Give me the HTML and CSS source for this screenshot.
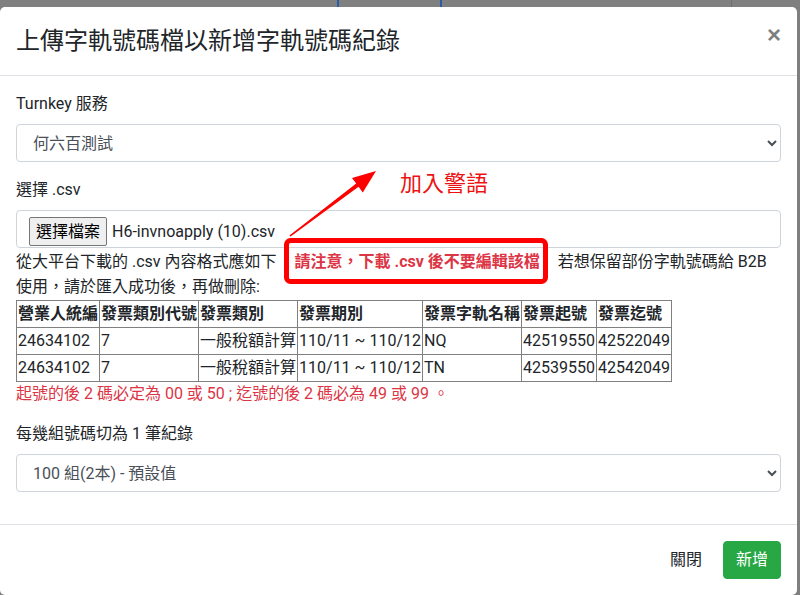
FILE: index.html
```html
<!DOCTYPE html>
<html lang="zh-Hant">
<head>
<meta charset="utf-8">
<title>上傳字軌號碼檔</title>
<link rel="stylesheet" href="styles.css">
</head>
<body>
<div class="page-strip">
  <span class="strip-line blue l1"></span>
  <span class="strip-line blue l2"></span>
  <span class="strip-line gray l3"></span>
</div>
<div class="modal">
  <div class="modal-header">
    <h4 class="modal-title">上傳字軌號碼檔以新增字軌號碼紀錄</h4>
    <button class="close" type="button">×</button>
  </div>
  <div class="modal-body">
    <div class="form-group">
      <label class="label">Turnkey 服務</label>
      <select class="form-control"><option>何六百測試</option></select>
    </div>
    <div class="form-group">
      <label class="label">選擇 .csv</label>
      <div class="form-control file-input">
        <span class="file-btn">選擇檔案</span>
        <span class="file-name">H6-invnoapply (10).csv</span>
      </div>
      <div class="help">從大平台下載的 .csv 內容格式應如下<span class="warn">請注意，下載 .csv 後不要編輯該檔</span>若想保留部份字軌號碼給 B2B<br>使用，請於匯入成功後，再做刪除:</div>
      <table class="sample">
        <tr><th>營業人統編</th><th>發票類別代號</th><th>發票類別</th><th>發票期別</th><th>發票字軌名稱</th><th>發票起號</th><th>發票迄號</th></tr>
        <tr><td>24634102</td><td>7</td><td>一般稅額計算</td><td>110/11 ~ 110/12</td><td>NQ</td><td>42519550</td><td>42522049</td></tr>
        <tr><td>24634102</td><td>7</td><td>一般稅額計算</td><td>110/11 ~ 110/12</td><td>TN</td><td>42539550</td><td>42542049</td></tr>
      </table>
      <div class="note">起號的後 2 碼必定為 00 或 50 ; 迄號的後 2 碼必為 49 或 99 。</div>
    </div>
    <div class="form-group">
      <label class="label">每幾組號碼切為 1 筆紀錄</label>
      <select class="form-control"><option>100 組(2本) - 預設值</option></select>
    </div>
  </div>
  <div class="modal-footer">
    <button class="btn btn-plain" type="button">關閉</button>
    <button class="btn btn-success" type="button">新增</button>
  </div>
</div>
<div class="annotation">
  <svg class="annot-svg" width="800" height="595" viewBox="0 0 800 595">
    <rect x="286.5" y="240.5" width="259" height="41" rx="4" ry="4" fill="none" stroke="#ff0000" stroke-width="5"/>
    <polygon points="289.4,235.4 356.2,183.6 352,178 376,171 362.8,192.4 358.6,186.8 290.6,236.6" fill="#ff0000"/>
  </svg>
  <div class="annot-text">加入警語</div>
</div>
</body>
</html>
```
FILE: styles.css
```css
html, body {
  margin: 0;
  padding: 0;
}
body {
  position: relative;
  width: 800px;
  height: 595px;
  overflow: hidden;
  background: #7f7f7f;
  font-family: Roboto, "Noto Sans CJK TC", sans-serif;
  font-size: 16px;
  line-height: 1.5;
  color: #212529;
}
.page-strip {
  position: relative;
  height: 7px;
  background: #808080;
}
.strip-line {
  position: absolute;
  top: 0;
  width: 2px;
  height: 7px;
}
.strip-line.blue { background: #2a5ca8; }
.strip-line.gray { background: #6e6e6e; width: 1px; }
.l1 { left: 337px; }
.l2 { left: 440px; }
.l3 { left: 731px; }

.modal {
  width: 797px;
  background: #fff;
  border-radius: 5px;
  overflow: hidden;
}
.modal-header {
  display: flex;
  align-items: flex-start;
  padding: 16px;
  border-bottom: 1px solid #dee2e6;
}
.modal-title {
  margin: 0;
  font-size: 24px;
  font-weight: 400;
  line-height: 36px;
}
.close {
  margin: -16px -16px -16px auto;
  padding: 16px;
  border: 0;
  background: transparent;
  font-family: "Liberation Sans", Arial, sans-serif;
  font-size: 24px;
  font-weight: 700;
  line-height: 1;
  color: #000;
  opacity: .5;
  text-shadow: 0 1px 0 #fff;
}
.modal-body {
  padding: 16px;
}
.form-group {
  margin-bottom: 16px;
}
.label {
  display: block;
  margin-bottom: 8px;
}
.form-control {
  display: block;
  box-sizing: border-box;
  width: 100%;
  height: 38px;
  padding: 6px 12px;
  font-family: inherit;
  font-size: 16px;
  line-height: 24px;
  color: #495057;
  background: #fff;
  border: 1px solid #ced4da;
  border-radius: 4px;
}
.file-input {
  display: flex;
  align-items: flex-start;
  color: #212529;
}
.file-btn {
  box-sizing: border-box;
  height: 29px;
  padding: 2px 6px;
  line-height: 23px;
  background: #efefef;
  border: 1px solid #767676;
  border-radius: 2px;
  color: #000;
}
.file-name {
  margin-left: 5px;
  line-height: 29px;
}
.help {
  line-height: 24px;
}
.warn {
  display: inline-block;
  margin: 0 18px;
  padding: 1.5px 0;
  color: #dc3545;
  font-weight: 700;
}
.sample {
  margin-top: 1px;
  border-collapse: collapse;
}
.sample th, .sample td {
  border: 1px solid #808080;
  padding: 1px;
  text-align: left;
  line-height: 24px;
  white-space: nowrap;
}
.sample th { font-weight: 700; }
.note {
  color: #dc3545;
}
.modal-footer {
  display: flex;
  justify-content: flex-end;
  align-items: center;
  padding: 12px;
  border-top: 1px solid #dee2e6;
}
.btn {
  margin: 4px;
  height: 38px;
  padding: 6px 12px;
  border: 1px solid transparent;
  border-radius: 4px;
  font-family: inherit;
  font-size: 16px;
  line-height: 24px;
  background: transparent;
  color: #212529;
}
.btn-success {
  background: #28a745;
  border-color: #28a745;
  color: #fff;
}
.annotation {
  position: absolute;
  left: 0;
  top: 0;
  width: 800px;
  height: 595px;
  pointer-events: none;
}
.annot-svg {
  display: block;
}
.annot-text {
  position: absolute;
  left: 400px;
  top: 173px;
  font-size: 22px;
  line-height: 1;
  color: #ee1111;
}
```
